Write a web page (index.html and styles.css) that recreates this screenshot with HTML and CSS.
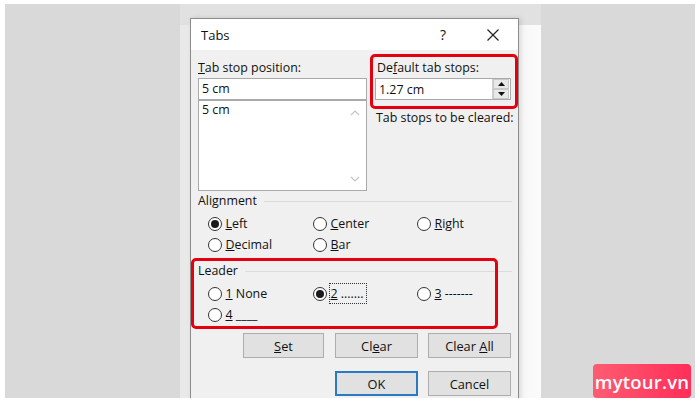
FILE: index.html
```html
<!DOCTYPE html>
<html>
<head>
<meta charset="utf-8">
<link rel="stylesheet" href="styles.css">
</head>
<body>
<div class="stage">
  <div class="page">
    <div class="dialog">
      <div class="titlebar">
        <span class="title">Tabs</span>
        <span class="help">?</span>
        <svg class="close" width="12" height="12" viewBox="0 0 12 12"><path d="M0.5 0.5L11.5 11.5M11.5 0.5L0.5 11.5" stroke="#222" stroke-width="1.2" fill="none"/></svg>
      </div>
      <div class="body">
        <div class="top">
          <div class="col-left">
            <div class="label"><u>T</u>ab stop position:</div>
            <div class="input">5 cm</div>
            <div class="listbox">
              <span>5 cm</span>
              <svg class="chev up" width="10" height="6" viewBox="0 0 10 6"><path d="M1 5L5 1L9 5" stroke="#c4c4c4" stroke-width="1.2" fill="none"/></svg>
              <svg class="chev down" width="10" height="6" viewBox="0 0 10 6"><path d="M1 1L5 5L9 1" stroke="#c4c4c4" stroke-width="1.2" fill="none"/></svg>
            </div>
          </div>
          <div class="col-right">
            <div class="label">De<u>f</u>ault tab stops:</div>
            <div class="spinner">
              <span>1.27 cm</span>
              <div class="spin">
                <div class="spin-btn"><svg width="7" height="4" viewBox="0 0 7 4"><path d="M0 4L3.5 0L7 4Z" fill="#111"/></svg></div>
                <div class="spin-btn"><svg width="7" height="4" viewBox="0 0 7 4"><path d="M0 0L3.5 4L7 0Z" fill="#111"/></svg></div>
              </div>
            </div>
            <div class="label cleared">Tab stops to be cleared:</div>
          </div>
        </div>

        <div class="group-label align-label"><span>Alignment</span><i class="rule"></i></div>
        <div class="radios">
          <div class="radio"><span class="circle on"></span><span><u>L</u>eft</span></div>
          <div class="radio"><span class="circle"></span><span><u>C</u>enter</span></div>
          <div class="radio"><span class="circle"></span><span><u>R</u>ight</span></div>
          <div class="radio"><span class="circle"></span><span><u>D</u>ecimal</span></div>
          <div class="radio"><span class="circle"></span><span><u>B</u>ar</span></div>
        </div>

        <div class="group-label leader-label"><span>Leader</span><i class="rule"></i></div>
        <div class="radios">
          <div class="radio"><span class="circle"></span><span><u>1</u> None</span></div>
          <div class="radio"><span class="circle on"></span><span class="focus"><u>2</u> .......</span></div>
          <div class="radio"><span class="circle"></span><span><u>3</u> -------</span></div>
          <div class="radio"><span class="circle"></span><span><u>4</u> ____</span></div>
        </div>

        <div class="buttons row1">
          <div class="btn w81"><span><u>S</u>et</span></div>
          <div class="btn w83"><span>Cl<u>e</u>ar</span></div>
          <div class="btn w83"><span>Clear <u>A</u>ll</span></div>
        </div>
        <div class="buttons row2">
          <div class="btn w83 primary"><span>OK</span></div>
          <div class="btn w83"><span>Cancel</span></div>
        </div>
      </div>
      <div class="highlight hl-default"></div>
      <div class="highlight hl-leader"></div>
    </div>
  </div>
  <div class="logo">mytour.vn</div>
</div>
</body>
</html>
```

FILE: styles.css
```css
html, body {
  margin: 0;
  padding: 0;
  background: #ffffff;
}
body {
  width: 700px;
  height: 405px;
  overflow: hidden;
  font-family: "Open Sans", "Noto Sans", sans-serif;
  font-size: 12.4px;
  color: #111;
}
.stage {
  position: relative;
  margin: 4px 0 0 5px;
  width: 690px;
  height: 394px;
  background: #d9d9d9;
  display: flex;
  padding-left: 175px;
  box-sizing: border-box;
  overflow: hidden;
}
.page {
  width: 361px;
  height: 394px;
  flex: none;
  background:
    linear-gradient(#e1e1e1, #e1e1e1) top / 100% 21px no-repeat,
    linear-gradient(90deg, #e9e9e9 0, #e9e9e9 10px, #f2f2f2 10px, #f2f2f2 338px, #f7f7f7 339px, #fbfbfb 100%);
  padding: 14px 0 0 10px;
  box-sizing: border-box;
}
.dialog {
  position: relative;
  width: 329px;
  height: 420px;
  box-sizing: border-box;
  border: 1px solid #8c8c8c;
  background: #f0f0f0;
  box-shadow: 2px 0 5px rgba(0, 0, 0, 0.12);
}
.titlebar {
  height: 31px;
  background: #ffffff;
  display: flex;
  align-items: center;
  padding-left: 10px;
  font-size: 13px;
  color: #111;
}
.title {
  flex: 1;
  padding-top: 1px;
}
.help {
  width: 12px;
  text-align: center;
  margin-right: 38px;
  font-size: 14px;
}
.close {
  margin-right: 19px;
}
.body {
  padding: 0 6px 0 7px;
}
.top {
  display: flex;
}
.col-left {
  width: 169px;
  flex: none;
}
.col-right {
  flex: 1;
  padding-left: 8px;
}
.label {
  height: 16px;
  line-height: 16px;
  margin-top: 10px;
  margin-bottom: 2px;
  white-space: nowrap;
}
.col-right .label {
  padding-left: 2px;
}
.label.cleared {
  margin-top: 10px;
  padding-left: 1px;
}
.input {
  height: 22px;
  box-sizing: border-box;
  border: 1px solid #a9a9a9;
  background: #fff;
  line-height: 20px;
  padding-left: 3px;
}
.listbox {
  position: relative;
  height: 91px;
  box-sizing: border-box;
  border: 1px solid #a9a9a9;
  background: #fff;
  padding-left: 3px;
  line-height: 18px;
}
.chev {
  position: absolute;
  right: 6px;
}
.chev.up { top: 9px; }
.chev.down { bottom: 8px; }
.spinner {
  height: 22px;
  width: 136px;
  box-sizing: border-box;
  border: 1px solid #a9a9a9;
  background: #fff;
  display: flex;
  align-items: center;
  padding-left: 3px;
}
.spinner span {
  flex: 1;
}
.spin {
  width: 17px;
  height: 20px;
  display: flex;
  flex-direction: column;
  border-left: 1px solid #d0d0d0;
}
.spin-btn {
  flex: 1;
  display: flex;
  align-items: center;
  justify-content: center;
  background: #e8e8e8;
  border: 1px solid #c9c9c9;
  margin: 0 1px 0 0;
}
.group-label {
  display: flex;
  align-items: center;
  height: 16px;
  line-height: 16px;
}
.group-label span {
  padding-right: 7px;
}
.rule {
  flex: 1;
  height: 1px;
  background: #dcdcdc;
}
.align-label { margin-top: 2px; }
.leader-label { margin-top: 8px; }
.radios {
  margin-top: 4px;
  padding-left: 10px;
  display: grid;
  grid-template-columns: 105px 104px auto;
  grid-auto-rows: 21px;
}
.radio {
  display: flex;
  align-items: center;
  white-space: nowrap;
}
.circle {
  width: 14px;
  height: 14px;
  box-sizing: border-box;
  border: 1px solid #333;
  border-radius: 50%;
  background: #fff;
  margin-right: 4px;
  margin-left: -0.5px;
  display: flex;
  align-items: center;
  justify-content: center;
  flex: none;
}
.circle.on::after {
  content: "";
  width: 8px;
  height: 8px;
  border-radius: 50%;
  background: #1a1a1a;
}
.focus {
  outline: 1px dotted #333;
  outline-offset: 1px;
  padding-right: 1px;
}
.buttons {
  display: flex;
  justify-content: flex-end;
  padding-right: 1px;
  gap: 11px;
}
.buttons.row1 { margin-top: 8px; }
.buttons.row2 { margin-top: 13px; }
.btn {
  height: 25px;
  box-sizing: border-box;
  border: 1px solid #adadad;
  background: #e1e1e1;
  display: flex;
  align-items: center;
  justify-content: center;
  font-size: 12.8px;
  white-space: pre;
}
.w81 { width: 81px; }
.w83 { width: 83px; }
.row1 .btn:last-child { margin-left: -1px; }
.row2 .btn:last-child { margin-left: -1px; }
.btn.primary {
  border: 2px solid #2a7ac2;
}
.highlight {
  position: absolute;
  border: 3px solid #e5000f;
  border-radius: 5px;
  box-sizing: border-box;
  pointer-events: none;
}
.hl-default {
  left: 179px;
  top: 35px;
  width: 148px;
  height: 55px;
}
.hl-leader {
  left: 0;
  top: 239px;
  width: 307px;
  height: 71px;
}
.logo {
  position: absolute;
  left: 588px;
  top: 360px;
  width: 98px;
  height: 34px;
  border-radius: 4px;
  background: linear-gradient(90deg, #ff5c72, #ff2e58);
  color: #fff;
  font-family: "Open Sans", sans-serif;
  font-weight: 600;
  font-size: 18.5px;
  display: flex;
  align-items: center;
  justify-content: center;
  letter-spacing: 0.2px;
}
```
